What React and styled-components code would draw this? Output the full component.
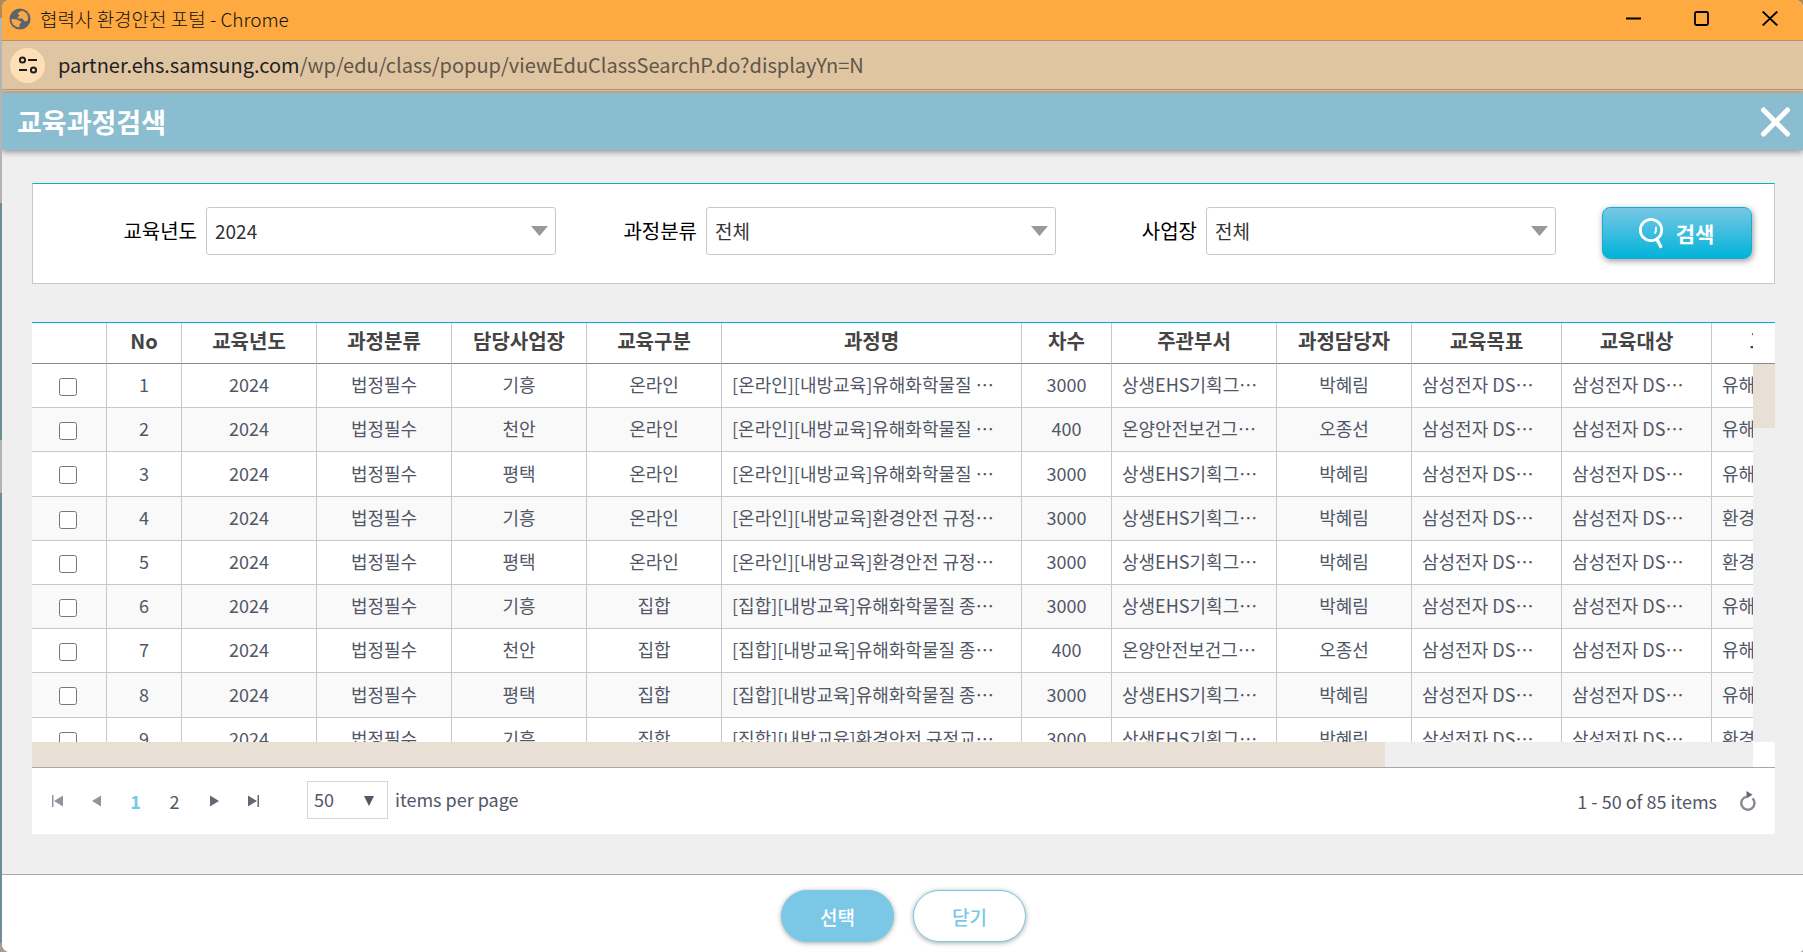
import React from 'react';
import styled, { createGlobalStyle } from 'styled-components';

const GlobalStyle = createGlobalStyle`
  * {
    box-sizing: border-box;
  }

  body {
    margin: 0;
    font-family: 'Noto Sans CJK KR', 'Noto Sans', sans-serif;
    font-size: 18px;
    color: #515766;
  }

  button,
  select,
  input {
    font-family: inherit;
  }
`;

// strip of the desktop that stays visible behind the popup window
const Desktop = styled.div`
  height: 100vh;
  min-height: 640px;
  padding-left: 2px;
  background: linear-gradient(
    #b08a55 0 18px,
    #b4b4b4 18px 203px,
    #6d8c96 203px 440px,
    #b4b4b4 440px 493px,
    #6d8c96 493px 943px,
    #a39c98 943px
  );
`;

const Window = styled.div`
  display: flex;
  flex-direction: column;
  height: 100%;
  border-radius: 8px 8px 4px 8px;
  overflow: hidden;
  background: #efefef;
`;

const TitleBar = styled.div`
  display: flex;
  align-items: center;
  height: 41px;
  padding: 0 25px 3px 7px;
  background: #ffaa40;
  border-bottom: 1px solid #ad9477;
  color: #111;
`;

const WindowTitle = styled.span`
  flex: 1;
  margin-left: 9px;
  font-size: 19px;
  font-weight: 300;
  line-height: 24px;
`;

const WindowControls = styled.div`
  display: flex;
  gap: 53px;
`;

const IconButton = styled.button`
  display: flex;
  align-items: center;
  justify-content: center;
  padding: 0;
  border: 0;
  background: none;
  color: inherit;
  cursor: pointer;
`;

const AddressBar = styled.div`
  display: flex;
  align-items: center;
  height: 52px;
  padding: 0 8px 4px;
  background: linear-gradient(#dfc5a2 0 48px, #b89878 48px 49px, #d9bf9e 49px 50px, #ccb192 50px);
`;

const SiteInfo = styled(IconButton)`
  width: 35px;
  height: 35px;
  border-radius: 50%;
  background: #ffdfb8;
`;

const Url = styled.span`
  margin-left: 13px;
  font-size: 20px;
  line-height: 28px;
  color: #5f554a;

  b {
    font-weight: 400;
    color: #1f1f1f;
  }
`;

const Header = styled.header`
  display: flex;
  align-items: center;
  justify-content: space-between;
  flex-shrink: 0;
  height: 57px;
  padding: 0 12px 0 15px;
  background: #8abdcf;
  box-shadow: 0 2px 6px rgba(0, 0, 0, 0.4);
  color: #fff;

  h1 {
    margin: 0;
    font-size: 27px;
    line-height: 40px;
    font-weight: 700;
  }
`;

const Main = styled.main`
  display: flex;
  flex-direction: column;
  flex: 1;
  min-height: 0;
  gap: 38px;
  padding: 33px 28px 40px 30px;
`;

const SearchForm = styled.form`
  display: grid;
  grid-template-columns: repeat(3, 1fr) 196px;
  padding: 23px 22px 24px 23px;
  background: #fff;
  border: 1px solid #c8c8c8;
  border-top-color: #12afc9;
`;

const Field = styled.div`
  display: flex;
  align-items: center;
  justify-content: flex-end;
  gap: 9px;
  height: 48px;

  label {
    padding-bottom: 2px;
    font-size: 20px;
    color: #000;
  }
`;

const SelectBox = styled.div`
  position: relative;
  width: 70%;

  svg {
    position: absolute;
    top: 19px;
    right: 8px;
    pointer-events: none;
  }
`;

const Select = styled.select`
  display: block;
  width: 100%;
  height: 48px;
  padding: 0 30px 2px 8px;
  appearance: none;
  background: #fff;
  border: 1px solid #c8c8c8;
  border-radius: 3px;
  font-size: 19px;
  color: #333;
`;

const SearchButton = styled.button`
  display: flex;
  align-items: center;
  justify-content: center;
  justify-self: end;
  gap: 12px;
  width: 150px;
  height: 52px;
  padding: 0 8px 0 6px;
  border: 1px solid #15aed2;
  border-radius: 8px;
  background: linear-gradient(#78c7e4, #00b3da);
  box-shadow: 1px 2px 6px rgba(0, 0, 0, 0.4);
  color: #fff;
  font-size: 21px;
  font-weight: 700;
`;

const Grid = styled.section`
  display: flex;
  flex-direction: column;
  flex: 1;
  min-height: 0;
  background: #fff;
  border-top: 1px solid #00b0cc;
`;

const GridBody = styled.div`
  display: grid;
  grid-template-columns: 1fr 22px;
  grid-template-rows: 41px 1fr 25px;
  flex: 1;
  min-height: 0;
`;

const GridView = styled.div`
  grid-row: 1 / 3;
  min-width: 0;
  overflow: hidden;
`;

const Table = styled.table`
  width: 1829px;
  table-layout: fixed;
  border-collapse: separate;
  border-spacing: 0;

  th {
    height: 41px;
    padding: 0 0 4px;
    border-bottom: 1px solid #8a8a8a;
    border-left: 1px solid #c8c8c8;
    font-size: 20px;
    line-height: 28px;
    font-weight: 700;
    color: #444;
  }

  td {
    height: 44px;
    padding: 0 10px 3px;
    border-bottom: 1px solid #c8c8c8;
    border-left: 1px solid #c8c8c8;
    line-height: 26px;
    white-space: nowrap;
    overflow: hidden;
  }

  th:first-child,
  td:first-child {
    border-left: 0;
  }

  tbody tr:nth-child(even) {
    background: #f9f9f9;
  }

  tbody tr:nth-child(5n + 3) td {
    height: 45px;
  }
`;

const Cell = styled.td`
  text-align: ${({ $left }) => ($left ? 'left' : 'center')};
`;

// keeps the dots at mid height after Latin letters too
const Dots = styled.span`
  display: inline-block;
`;

const Checkbox = styled.input`
  display: block;
  width: 18px;
  height: 18px;
  margin: 5px auto 0 17px;
`;

const HeaderGap = styled.div`
  border-bottom: 1px solid #8a8a8a;
`;

const ScrollTrack = styled.div`
  background: #efefef;
`;

const ScrollThumb = styled.div`
  width: ${({ $width }) => $width || '100%'};
  height: ${({ $height }) => $height || '100%'};
  background: #e8e0d5;
`;

const Pager = styled.div`
  display: flex;
  align-items: center;
  height: 67px;
  padding: 0 18px 0 6px;
  border-top: 1px solid #a6a6a6;
  font-size: 18px;

  > label {
    padding-bottom: 4px;
  }
`;

const PageButton = styled(IconButton)`
  width: 39px;
  height: 39px;
  font-size: 18px;
  color: ${({ $current }) => ($current ? '#76c8e8' : '#515766')};
  font-weight: ${({ $current }) => ($current ? 700 : 400)};
  opacity: ${({ disabled }) => (disabled ? 0.7 : 1)};
`;

const PageSize = styled.div`
  position: relative;
  width: 81px;
  margin: 0 7px 2px 35px;

  select {
    display: block;
    width: 100%;
    height: 38px;
    padding: 0 6px 2px;
    appearance: none;
    background: #fff;
    border: 1px solid #d5d5d5;
    border-radius: 0;
    font-size: 18px;
    color: #515766;
  }

  svg {
    position: absolute;
    top: 15px;
    right: 14px;
    pointer-events: none;
  }
`;

const PagerInfo = styled.span`
  margin-left: auto;
  margin-right: 22px;
`;

const Footer = styled.footer`
  display: flex;
  justify-content: center;
  gap: 19px;
  padding: 15px 0 10px 2px;
  border-top: 1px solid #a8a8a8;
  background: #fff;
`;

const PillButton = styled.button`
  width: 113px;
  height: 52px;
  padding: 0;
  border: 1px solid #7ac8e6;
  border-radius: 26px;
  background: ${({ $primary }) => ($primary ? '#7ac8e6' : '#fff')};
  box-shadow: 0 1px 5px rgba(0, 0, 0, 0.35);
  color: ${({ $primary }) => ($primary ? '#fff' : '#7ac8e6')};
  font-size: 19px;
  font-weight: 500;
`;

const columns = [
  { title: '', width: 74 },
  { title: 'No', width: 75 },
  { title: '교육년도', width: 135 },
  { title: '과정분류', width: 135 },
  { title: '담당사업장', width: 135 },
  { title: '교육구분', width: 135 },
  { title: '과정명', width: 300, left: true },
  { title: '차수', width: 90 },
  { title: '주관부서', width: 165, left: true },
  { title: '과정담당자', width: 135 },
  { title: '교육목표', width: 150, left: true },
  { title: '교육대상', width: 150, left: true },
  { title: '교육내용', width: 150, left: true },
];

const GIHEUNG = ['3000', '상생EHS기획그…', '박혜림'];
const ONYANG = ['400', '온양안전보건그…', '오종선'];

const courses = [
  ['기흥', '온라인', '[온라인][내방교육]유해화학물질 …', GIHEUNG, '유해'],
  ['천안', '온라인', '[온라인][내방교육]유해화학물질 …', ONYANG, '유해'],
  ['평택', '온라인', '[온라인][내방교육]유해화학물질 …', GIHEUNG, '유해'],
  ['기흥', '온라인', '[온라인][내방교육]환경안전 규정…', GIHEUNG, '환경'],
  ['평택', '온라인', '[온라인][내방교육]환경안전 규정…', GIHEUNG, '환경'],
  ['기흥', '집합', '[집합][내방교육]유해화학물질 종…', GIHEUNG, '유해'],
  ['천안', '집합', '[집합][내방교육]유해화학물질 종…', ONYANG, '유해'],
  ['평택', '집합', '[집합][내방교육]유해화학물질 종…', GIHEUNG, '유해'],
  ['기흥', '집합', '[집합][내방교육]환경안전 규정교…', GIHEUNG, '환경'],
];

const filters = [
  { id: 'year', label: '교육년도', value: '2024' },
  { id: 'category', label: '과정분류', value: '전체' },
  { id: 'site', label: '사업장', value: '전체' },
];

const GlobeIcon = () => (
  <svg width="22" height="22" viewBox="0 0 22 22">
    <circle cx="11" cy="11" r="10.5" fill="#5f6368" />
    <path
      d="M2.5 11c1.8.2 5.200-.2 6.800 1.200 1 1 2.500.5 2.900 1.800.3 1.300-1.500 1.400-1.600 2.600 0 .8-.2 1.600-.2 2.600C5.400 19 2.300 15.300 2.500 11zM12.200 2.700c-.6 1.300-2.900 1.100-3.300 2.600-.3 1.400 1.500 1.200 1.400 2.400-.2 1-2 .9-1.500 2.200.7 1.400 3.600.1 5 1.100.9.700 1 2.100 2.200 2.300.9.200 1.800-.4 2.700-.9 1.500-5-1.700-9.400-6.500-9.700z"
      fill="#f5a74a"
    />
  </svg>
);

const TuneIcon = () => (
  <svg width="20" height="18" viewBox="0 0 20 18" fill="none" stroke="#1f1f1f" strokeWidth="2">
    <circle cx="4.500" cy="4" r="2.600" />
    <path d="M10 4h9M1 14h8" />
    <circle cx="15.500" cy="14" r="2.600" />
  </svg>
);

const SearchIcon = () => (
  <svg width="26" height="32" viewBox="0 0 26 32" fill="none" stroke="#fff" strokeLinecap="round">
    <circle cx="13" cy="13" r="10.700" strokeWidth="2.800" />
    <path d="M19.500 23.500l3.200 6" strokeWidth="3.400" />
    <path d="M18 10.500c.2 2-.1 4-.9 5.500" strokeWidth="1.800" />
  </svg>
);

const DownArrow = () => (
  <svg width="17" height="10" viewBox="0 0 17 10">
    <path d="M0 0h17L8.500 10z" fill="#999" />
  </svg>
);

const ReloadIcon = () => (
  <svg width="18" height="20" viewBox="0 0 18 20" fill="none" stroke="#858994" strokeWidth="2.400">
    <path d="M7.500 5.600A6.600 6.600 0 1 0 13.500 7.300" />
    <path d="M7.500 0v7.500l6-3.700z" fill="#626875" stroke="none" />
  </svg>
);

const pageIcons = {
  first: 'M1 1h1.500v12H1zM12 1.500v11L3 7z',
  prev: 'M11 1.500v11L2 7z',
  next: 'M3 1.500v11L12 7z',
  last: 'M11.500 1H13v12h-1.500zM2 1.500v11L11 7z',
};

const PageIcon = ({ name }) => (
  <svg width="14" height="14" viewBox="0 0 14 14" fill="#626875">
    <path d={pageIcons[name]} />
  </svg>
);

const CourseRow = ({ course, index }) => {
  const [site, type, name, [round, dept, manager], content] = course;
  const target = (
    <>
      삼성전자 DS<Dots>…</Dots>
    </>
  );
  const values = [index + 1, '2024', '법정필수', site, type, name, round, dept, manager, target, target, content];

  return (
    <tr>
      <td>
        <Checkbox type="checkbox" aria-label={`${index + 1}`} />
      </td>
      {values.map((value, i) => (
        <Cell key={i} $left={columns[i + 1].left}>
          {value}
        </Cell>
      ))}
    </tr>
  );
};

const App = () => (
  <Desktop>
    <GlobalStyle />
    <Window>
      <TitleBar>
        <GlobeIcon />
        <WindowTitle>협력사 환경안전 포털 - Chrome</WindowTitle>
        <WindowControls>
          <IconButton aria-label="최소화">
            <svg width="15" height="15" viewBox="0 0 15 15">
              <path d="M0 7.500h15" stroke="#000" strokeWidth="2" />
            </svg>
          </IconButton>
          <IconButton aria-label="최대화">
            <svg width="15" height="15" viewBox="0 0 15 15">
              <rect x="1" y="1" width="13" height="13" rx="1.500" fill="none" stroke="#000" strokeWidth="1.800" />
            </svg>
          </IconButton>
          <IconButton aria-label="창 닫기">
            <svg width="16" height="15" viewBox="0 0 16 15">
              <path d="M.7.5l14.600 14M15.300.5L.7 14.500" stroke="#000" strokeWidth="1.800" />
            </svg>
          </IconButton>
        </WindowControls>
      </TitleBar>

      <AddressBar>
        <SiteInfo aria-label="사이트 정보">
          <TuneIcon />
        </SiteInfo>
        <Url>
          <b>partner.ehs.samsung.com</b>/wp/edu/class/popup/viewEduClassSearchP.do?displayYn=N
        </Url>
      </AddressBar>

      <Header>
        <h1>교육과정검색</h1>
        <IconButton aria-label="닫기">
          <svg width="31" height="31" viewBox="0 0 31 31">
            <path d="M3.500 4l24 24M27.500 4l-24 24" stroke="#fff" strokeWidth="5" strokeLinecap="round" />
          </svg>
        </IconButton>
      </Header>

      <Main>
        <SearchForm onSubmit={(e) => e.preventDefault()}>
          {filters.map(({ id, label, value }) => (
            <Field key={id}>
              <label htmlFor={id}>{label}</label>
              <SelectBox>
                <Select id={id}>
                  <option>{value}</option>
                </Select>
                <DownArrow />
              </SelectBox>
            </Field>
          ))}
          <SearchButton type="submit">
            <SearchIcon />
            검색
          </SearchButton>
        </SearchForm>

        <Grid>
          <GridBody>
            <GridView>
              <Table>
                <colgroup>
                  {columns.map(({ title, width }) => (
                    <col key={title} width={width} />
                  ))}
                </colgroup>
                <thead>
                  <tr>
                    {columns.map(({ title }) => (
                      <th key={title} scope="col">
                        {title}
                      </th>
                    ))}
                  </tr>
                </thead>
                <tbody>
                  {courses.map((course, i) => (
                    <CourseRow key={i} course={course} index={i} />
                  ))}
                </tbody>
              </Table>
            </GridView>
            <HeaderGap />
            <ScrollTrack>
              <ScrollThumb $height="17%" />
            </ScrollTrack>
            <ScrollTrack>
              <ScrollThumb $width="78.6%" />
            </ScrollTrack>
          </GridBody>

          <Pager>
            <PageButton disabled aria-label="첫 페이지">
              <PageIcon name="first" />
            </PageButton>
            <PageButton disabled aria-label="이전 페이지">
              <PageIcon name="prev" />
            </PageButton>
            <PageButton $current>1</PageButton>
            <PageButton>2</PageButton>
            <PageButton aria-label="다음 페이지">
              <PageIcon name="next" />
            </PageButton>
            <PageButton aria-label="마지막 페이지">
              <PageIcon name="last" />
            </PageButton>
            <PageSize>
              <select id="pageSize">
                <option>50</option>
              </select>
              <svg width="10" height="10" viewBox="0 0 10 10">
                <path d="M0 0h10L5 10z" fill="#515766" />
              </svg>
            </PageSize>
            <label htmlFor="pageSize">items per page</label>
            <PagerInfo>1 - 50 of 85 items</PagerInfo>
            <IconButton aria-label="새로고침">
              <ReloadIcon />
            </IconButton>
          </Pager>
        </Grid>
      </Main>

      <Footer>
        <PillButton $primary>선택</PillButton>
        <PillButton>닫기</PillButton>
      </Footer>
    </Window>
  </Desktop>
);

export default App;
